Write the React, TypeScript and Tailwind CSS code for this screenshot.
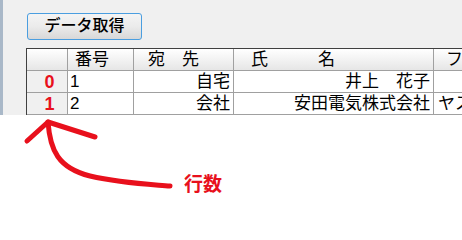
import React from "react";

const FONT = { fontFamily: '"Liberation Sans", "Noto Sans CJK JP", sans-serif' };

type Row = { no: string; dest: string; name: string; kana: string };

const ROWS: Row[] = [
  { no: "1", dest: "自宅", name: "井上　花子", kana: "" },
  { no: "2", dest: "会社", name: "安田電気株式会社", kana: "ヤスダデンキ" },
];

function HeaderCell({ w, children, className = "" }: { w: string; children?: React.ReactNode; className?: string }) {
  return (
    <div className={`${w} shrink-0 h-full border-r border-[#a0a0a0] flex items-center whitespace-nowrap ${className}`}>
      {children}
    </div>
  );
}

export default function App() {
  return (
    <div className="relative w-[462px] h-[207px] bg-white overflow-hidden text-black" style={FONT}>
      {/* form area */}
      <div className="flex h-[115px] bg-[#f0f0f0]">
        <div className="w-[3px] shrink-0 bg-[#a9b8c8]" />
        <div className="flex-1 min-w-0 flex flex-col">
          <div className="pl-[24px] pt-[13px]">
            <button className="w-[115px] h-[27px] rounded-[3px] border border-[#4a9ee0] bg-gradient-to-b from-[#f4f4f4] via-[#ebebeb] to-[#d8d8d8] text-[16px] font-medium leading-none text-black flex items-center justify-center pb-[1px]">
              データ取得
            </button>
          </div>

          {/* grid */}
          <div className="mt-[8px] ml-[23px] border-l border-t border-[#404040] text-[17px] leading-none">
            <div className="flex h-[22px] border-b border-[#a0a0a0] bg-gradient-to-b from-white to-[#e6e6e6]">
              <HeaderCell w="w-[41px]" />
              <HeaderCell w="w-[66px]" className="pl-[7px]">番号</HeaderCell>
              <HeaderCell w="w-[100px]" className="pl-[14px]">宛　先</HeaderCell>
              <HeaderCell w="w-[200px]" className="pl-[17px]">
                <span>氏</span>
                <span className="ml-[50px]">名</span>
              </HeaderCell>
              <div className="flex-1 min-w-0 h-full flex items-center pl-[12px] whitespace-nowrap overflow-hidden">フリガナ</div>
            </div>
            {ROWS.map((r, i) => (
              <div key={r.no} className="flex h-[22px] border-b border-[#a0a0a0] bg-white">
                <div className="w-[41px] shrink-0 h-full border-r border-[#a0a0a0] bg-[#f0f0f0] flex items-center justify-center pl-[5px]">
                  <span className="text-[18px] font-bold text-[#e8101c]">{i}</span>
                </div>
                <div className="w-[66px] shrink-0 h-full border-r border-[#a0a0a0] flex items-center pl-[2px]">{r.no}</div>
                <div className="w-[100px] shrink-0 h-full border-r border-[#a0a0a0] flex items-center justify-end pr-[3px] whitespace-nowrap">{r.dest}</div>
                <div className="w-[200px] shrink-0 h-full border-r border-[#a0a0a0] flex items-center justify-end pr-[3px] whitespace-nowrap">{r.name}</div>
                <div className="flex-1 min-w-0 h-full flex items-center pl-[4px] whitespace-nowrap overflow-hidden">{r.kana}</div>
              </div>
            ))}
          </div>
        </div>
      </div>

      {/* annotation arrow */}
      <svg className="absolute left-0 top-0" width="462" height="207" viewBox="0 0 462 207">
        <g fill="none" stroke="#e8101c" strokeWidth="5" strokeLinecap="round" strokeLinejoin="round">
          <path d="M48 122 C50 150 58 168 90 176 C120 183 145 184 170 186" />
          <path d="M27 141 L48 122 L95 137" />
        </g>
      </svg>
      <div className="absolute left-[184px] top-[175px] text-[19px] font-bold leading-none text-[#e8101c]">行数</div>
    </div>
  );
}
